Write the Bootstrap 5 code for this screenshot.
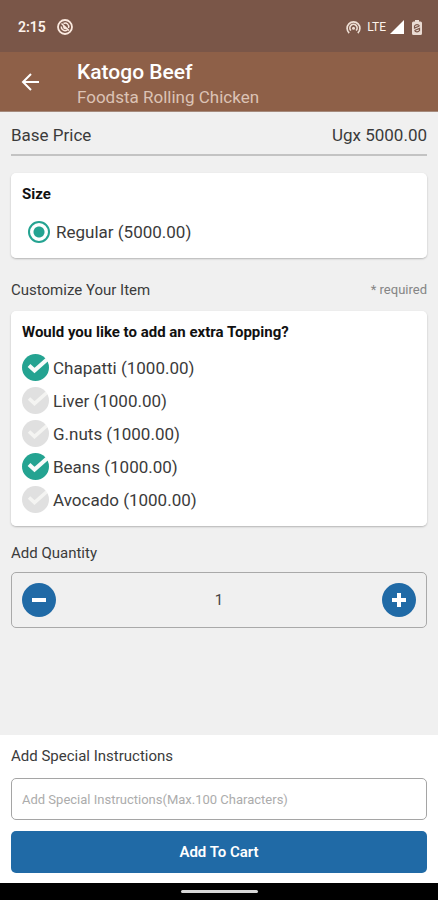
<!DOCTYPE html>
<html lang="en">
<head>
<meta charset="utf-8">
<meta name="viewport" content="width=device-width, initial-scale=1">
<title>Katogo Beef</title>
<link href="https://cdn.jsdelivr.net/npm/bootstrap@5.3.0/dist/css/bootstrap.min.css" rel="stylesheet">
<style>
body { font-family: Roboto, "Noto Sans", sans-serif; font-size: 17px; line-height: 22px; color: #3b3b3b; background: #f0f0f0; }
.edge { padding-left: 11px; padding-right: 11px; }
.status-bar { height: 52px; padding: 2px 16px 0 18px; background: #7a5648; color: #fdf3ec; font-size: 14px; font-weight: 600; }
.status-bar .clock { margin-right: 10px; }
.status-bar .network { font-size: 12px; font-weight: 400; margin-left: 6px; }
.app-bar { height: 60px; background: #8e6048; color: #fff; padding: 0 21px; gap: 37px; border-bottom: 1px solid #a58a7c; }
.app-bar h1 { font-size: 21px; line-height: 26px; font-weight: 500; }
.app-bar p { font-size: 17px; line-height: 24px; color: #dcc3b5; }
.price-row { padding: 12px 0 8px; border-bottom: 2px solid #c3c3c3; margin-bottom: 17px; }
.panel { border: 0; border-radius: 5px; padding: 10px 11px; box-shadow: 0 1px 2px rgba(0,0,0,.25); }
.panel legend, .section-label { font-size: 15px; line-height: 22px; }
.panel legend { font-weight: 700; color: #111; }
.section-head { padding: 21px 0 10px; }
.option { height: 33px; gap: 4px; }
.option label { cursor: pointer; }
.option-single { margin-top: 2px; padding-left: 6px; gap: 6px; }
.option input { appearance: none; flex: none; margin: 0; border-radius: 50%; }
.tick { width: 27px; height: 27px; background: #e0e0e0 url("data:image/svg+xml,%3Csvg xmlns='http://www.w3.org/2000/svg' viewBox='0 0 27 27'%3E%3Cpath d='M7 11.500l5.500 5L25 5.500' fill='none' stroke='%23f4f4f2' stroke-width='3.600'/%3E%3C/svg%3E"); }
.tick:checked { background-color: #24a391; background-image: url("data:image/svg+xml,%3Csvg xmlns='http://www.w3.org/2000/svg' viewBox='0 0 27 27'%3E%3Cpath d='M7 11.500l5.500 5L25 5.500' fill='none' stroke='%23f8fbfa' stroke-width='4'/%3E%3C/svg%3E"); }
.dot { width: 22px; height: 22px; border: 2px solid #24a391; background: #fff; }
.dot:checked { background: radial-gradient(circle, #24a391 5px, #fff 6px); }
.required-note { font-size: 13px; color: #858585; }
.stepper { height: 56px; border: 1px solid #a9a9a9; border-radius: 5px; padding: 0 10px; }
.stepper input { min-width: 0; border: 0; background: transparent; text-align: center; font-size: 15px; color: #444; }
.round-btn { width: 34px; height: 34px; padding: 0; border: 0; border-radius: 50%; background: #206aa6; flex: none; }
.order-footer { background: #fff; padding-top: 10px; padding-bottom: 10px; }
.note-input { height: 42px; border: 1px solid #a5a5a5; border-radius: 5px; padding: 0 10px; font-size: 13px; margin-top: 11px; }
.note-input::placeholder { color: #acacac; }
.cart-btn { height: 42px; margin-top: 11px; background: #206aa6; border: 0; border-radius: 5px; color: #fff; font-size: 15px; font-weight: 600; }
.cart-btn:hover, .round-btn:hover { background: #195889; color: #fff; }
.gesture-bar { height: 17px; background: #000; }
.gesture-bar span { width: 77px; height: 3px; border-radius: 2px; background: #d8d8d8; }
</style>
</head>
<body>
<div class="d-flex flex-column min-vh-100">
  <div class="status-bar d-flex align-items-center">
    <span class="clock">2:15</span>
    <svg width="18" height="18" viewBox="0 0 18 18" fill="none" stroke="#fbe9df" aria-hidden="true"><circle cx="9" cy="9" r="7" stroke-width="1.800"/><path d="M5.500 5.500L13 12.500M5.300 8.500a3.700 3.700 0 0 0 6 3.300M7.500 5.500a3.600 3.600 0 0 1 5 4.500M7.500 8l.7 2 2 .5" stroke-width="1.500"/></svg>
    <svg class="ms-auto" width="15" height="15" viewBox="0 0 15 15" fill="none" stroke="#eedfd5" stroke-width="1.700" aria-hidden="true"><path d="M3.200 13A6.400 6.400 0 1 1 11.800 13M4.900 10.500a3.600 3.600 0 1 1 5.200 0"/><circle cx="7.500" cy="8.200" r="1.500" fill="#eedfd5" stroke="none"/></svg>
    <span class="network">LTE</span>
    <svg class="ms-1" width="14" height="14" viewBox="0 0 14 14" fill="#fff" aria-hidden="true"><path d="M14 0v14H0z"/></svg>
    <svg class="ms-2" width="10" height="15" viewBox="0 0 10 15" aria-hidden="true"><path d="M3 0h4v1.500h1.500q1.500 0 1.500 1.500v10.500q0 1.500-1.500 1.500h-7Q0 15 0 13.500V3Q0 1.500 1.500 1.500H3z" fill="#e9dbd3"/><path d="M7.500 6A3 3 0 0 0 2.500 6v2l5-2M2.500 10.500a3 3 0 0 0 5 0v-2l-5 2" fill="none" stroke="#7a5648" stroke-width="1.200"/></svg>
  </div>
  <header class="app-bar d-flex align-items-center">
    <a href="#" aria-label="Back" class="d-flex"><svg width="19" height="18" viewBox="0 0 19 18" fill="none" stroke="#fff" stroke-width="2"><path d="M18 9H2M10 1L2 9l8 8"/></svg></a>
    <div class="pt-1">
      <h1 class="m-0">Katogo Beef</h1>
      <p class="m-0">Foodsta Rolling Chicken</p>
    </div>
  </header>
  <main class="edge flex-grow-1">
    <div class="price-row d-flex justify-content-between"><span>Base Price</span><span>Ugx 5000.00</span></div>
    <fieldset class="card panel">
      <legend class="mb-2">Size</legend>
      <div class="option option-single d-flex align-items-center"><input class="dot" type="radio" name="size" id="regular" checked><label for="regular">Regular (5000.00)</label></div>
    </fieldset>
    <div class="section-head section-label d-flex justify-content-between"><span>Customize Your Item</span><span class="required-note">* required</span></div>
    <fieldset class="card panel">
      <legend class="mb-2">Would you like to add an extra Topping?</legend>
      <div class="option d-flex align-items-center"><input class="tick" type="checkbox" id="chapatti" checked><label for="chapatti">Chapatti (1000.00)</label></div>
      <div class="option d-flex align-items-center"><input class="tick" type="checkbox" id="liver"><label for="liver">Liver (1000.00)</label></div>
      <div class="option d-flex align-items-center"><input class="tick" type="checkbox" id="gnuts"><label for="gnuts">G.nuts (1000.00)</label></div>
      <div class="option d-flex align-items-center"><input class="tick" type="checkbox" id="beans" checked><label for="beans">Beans (1000.00)</label></div>
      <div class="option d-flex align-items-center"><input class="tick" type="checkbox" id="avocado"><label for="avocado">Avocado (1000.00)</label></div>
    </fieldset>
    <label class="section-label d-block mt-3 mb-2" for="quantity">Add Quantity</label>
    <div class="stepper d-flex align-items-center">
      <button class="btn round-btn d-flex align-items-center justify-content-center" type="button" aria-label="Decrease"><svg width="14" height="14" viewBox="0 0 14 14" stroke="#fff" stroke-width="4"><path d="M0 7h14"/></svg></button>
      <input class="flex-grow-1" type="text" inputmode="numeric" id="quantity" value="1">
      <button class="btn round-btn d-flex align-items-center justify-content-center" type="button" aria-label="Increase"><svg width="14" height="14" viewBox="0 0 14 14" stroke="#fff" stroke-width="4"><path d="M0 7h14M7 0v14"/></svg></button>
    </div>
  </main>
  <footer class="order-footer edge">
    <label class="section-label d-block" for="note">Add Special Instructions</label>
    <input class="note-input w-100 d-block" id="note" type="text" maxlength="100" placeholder="Add Special Instructions(Max.100 Characters)">
    <button class="btn cart-btn w-100 d-block" type="button">Add To Cart</button>
  </footer>
  <div class="gesture-bar d-flex align-items-center justify-content-center"><span></span></div>
</div>
<script src="https://cdn.jsdelivr.net/npm/bootstrap@5.3.0/dist/js/bootstrap.bundle.min.js"></script>
</body>
</html>
